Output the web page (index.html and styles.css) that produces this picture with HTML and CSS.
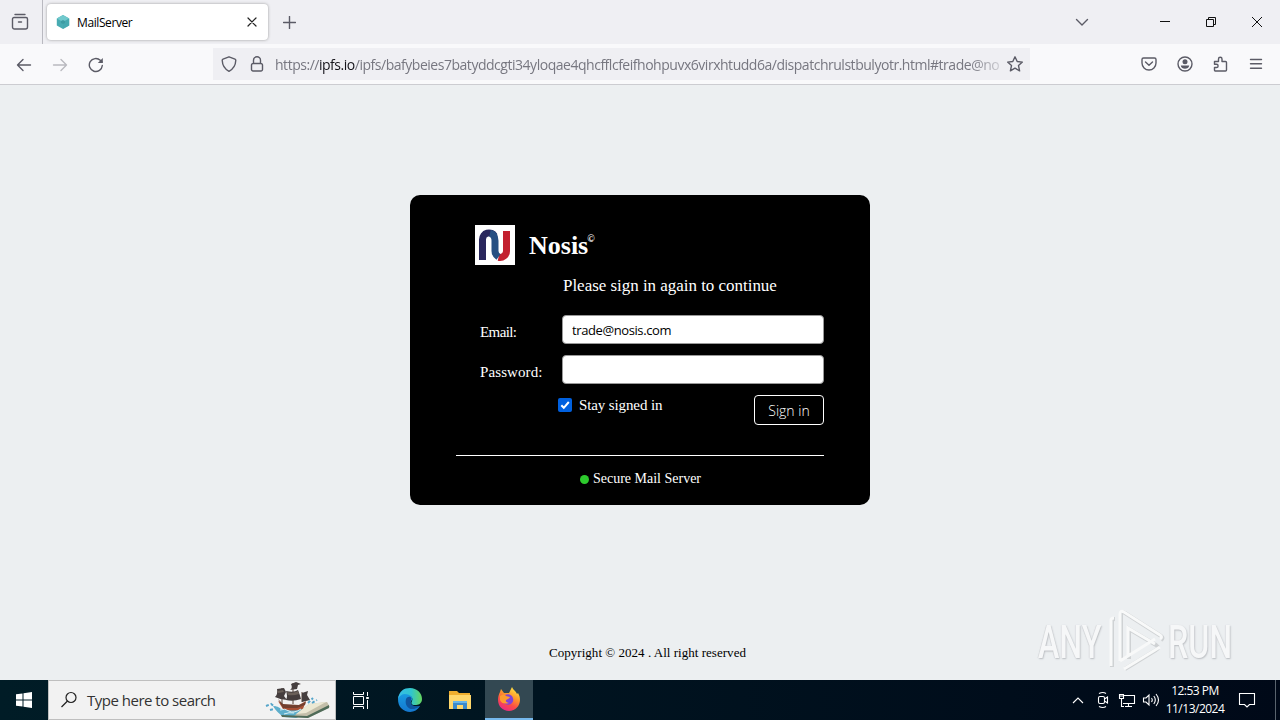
FILE: index.html
```html
<!DOCTYPE html>
<html lang="en">
<head>
    <meta charset="utf-8">
    <title>MailServer</title>
    <link rel="stylesheet" href="styles.css">
</head>
<body>
    <div class="tab-bar">
        <div class="tab-view">
            <svg class="line" width="18" height="18" viewBox="0 0 18 18"><path d="M4 1.500h10M3 4.500h12a1.500 1.500 0 0 1 1.500 1.500v8a2 2 0 0 1-2 2h-11a2 2 0 0 1-2-2V6A1.500 1.500 0 0 1 3 4.500zM7.500 9h3"/></svg>
        </div>
        <div class="tab">
            <svg width="14" height="14" viewBox="0 0 14 14"><path fill="#48abb2" d="M7 0l6.200 3.500v7L7 14 .8 10.500v-7z"/><path fill="#71c9cd" d="M7 0l6.200 3.500L7 7 .8 3.500z"/><path fill="#45a9af" d="M7 7l6.200-3.500v7L7 14z" opacity=".6"/><path fill="#3d9ca3" d="M5 6l2-1 2 1v2L7 9 5 8z"/></svg>
            <span class="tab-title">MailServer</span>
            <svg class="dark" width="10" height="10" viewBox="0 0 10 10"><path d="M1 1l8 8M9 1L1 9"/></svg>
        </div>
        <svg class="line new-tab" width="13" height="13" viewBox="0 0 13 13"><path d="M6.500 .5v12M.5 6.500h12"/></svg>
        <div class="window-buttons">
            <svg class="line" width="14" height="14" viewBox="0 0 14 14"><path d="M1.500 4.500L7 10l5.500-5.500"/></svg>
            <svg class="win" width="12" height="12" viewBox="0 0 12 12"><path d="M1 5.500h10"/></svg>
            <svg class="win" width="12" height="12" viewBox="0 0 12 12"><path d="M1.500 3.500h7v7h-7zM3.500 3.500v-2h7v7h-2"/></svg>
            <svg class="win" width="12" height="12" viewBox="0 0 12 12"><path d="M1 1l10 10M11 1L1 11"/></svg>
        </div>
    </div>

    <div class="toolbar">
        <div class="nav-buttons">
            <svg class="line" width="16" height="16" viewBox="0 0 16 16"><path d="M14.500 8H1.500M7 2.500L1.500 8 7 13.500"/></svg>
            <svg class="line off" width="16" height="16" viewBox="0 0 16 16"><path d="M1.500 8h13M9 2.500L14.500 8 9 13.500"/></svg>
            <svg class="line" width="16" height="16" viewBox="0 0 16 16"><path d="M14.300 8.500a6.500 6.500 0 1 1-2-5.200L14 5"/><path class="solid" d="M14.800 1v5h-5z"/></svg>
        </div>
        <div class="url-bar">
            <svg class="line" width="16" height="16" viewBox="0 0 16 16"><path d="M8 .8l6 2.400c.5.200.8.600.8 1.100C14.600 9.500 12.500 13 8 15.300 3.500 13 1.400 9.500 1.200 4.300c0-.5.300-.9.800-1.100z"/></svg>
            <svg class="line lock" width="14" height="16" viewBox="0 0 14 16"><path d="M3 7.500h8a1.500 1.500 0 0 1 1.500 1.500v4.500A1.500 1.500 0 0 1 11 15H3a1.500 1.500 0 0 1-1.500-1.500V9A1.500 1.500 0 0 1 3 7.500zM3.500 7.500V4.300a3.500 3.500 0 0 1 7 0v3.200"/></svg>
            <div class="url"><span>https://</span><b>ipfs.io</b><span>/ipfs/bafybeies7batyddcgti34yloqae4qhcfflcfeifhohpuvx6virxhtudd6a/dispatchrulstbulyotr.html#trade@no</span></div>
            <svg class="line" width="16" height="16" viewBox="0 0 16 16"><path d="M8 .8l2.200 4.700 5.200.6-3.900 3.500 1.100 5.200L8 12.200l-4.600 2.600 1.100-5.200L.6 6.100l5.200-.6z"/></svg>
        </div>
        <div class="tools">
            <svg class="line" width="16" height="16" viewBox="0 0 16 16"><path d="M2.500 2h11A1.500 1.500 0 0 1 15 3.500V7A7 7 0 0 1 1 7V3.500A1.500 1.500 0 0 1 2.500 2zM4.500 6L8 9.300 11.500 6"/></svg>
            <svg class="line" width="16" height="16" viewBox="0 0 16 16"><circle cx="8" cy="8" r="7"/><circle class="solid" cx="8" cy="5.800" r="2.500"/><path class="solid" d="M3.800 9.500h8.400C12 11.700 10 12.700 8 12.700s-4-1-4.200-3.200z"/></svg>
            <svg class="line" width="16" height="16" viewBox="0 0 16 16"><path d="M1.500 5.500h4V3a1.700 1.700 0 0 1 3.500 0v2.500h3.500a1 1 0 0 1 1 1V14a1 1 0 0 1-1 1H2.500a1 1 0 0 1-1-1v-2.500h2a1.600 1.600 0 0 0 0-3.200h-2z"/></svg>
            <svg class="line" width="14" height="14" viewBox="0 0 14 14"><path d="M1.500 2.500h11M1.500 6.800h11M1.500 11.200h11"/></svg>
        </div>
    </div>

    <div class="page">
        <div class="card">
            <div class="brand">
                <svg width="40" height="40" viewBox="0 0 40 40">
                    <path fill="#fff" d="M0 0h40v40H0z"/>
                    <path fill="none" stroke="#29265c" stroke-width="7" d="M7.500 35V14.500a6.500 6.500 0 0 1 12-3.500"/>
                    <path fill="none" stroke="#c3202f" stroke-width="7" d="M31.500 6v20a6.500 6.500 0 0 1-8 6.300"/>
                    <path fill="none" stroke="#264f82" stroke-width="7" d="M15 8.200q5 1 5 7.500V26q0 3.500 3.500 6"/>
                </svg>
                <h1>Nosis<sup>©</sup></h1>
            </div>
            <p class="message">Please sign in again to continue</p>
            <div class="form-group">
                <label class="email-label" for="email">Email:</label>
                <input type="text" id="email" value="trade@nosis.com">
            </div>
            <div class="form-group">
                <label for="password">Password:</label>
                <input type="password" id="password">
            </div>
            <div class="form-actions">
                <span class="check"><svg width="14" height="14" viewBox="0 0 14 14"><path d="M3.300 7.200l2.500 2.600 5-5.800"/></svg></span>
                <span class="stay">Stay signed in</span>
                <button type="button">Sign in</button>
            </div>
            <div class="secure"><span class="dot"></span><span>Secure Mail Server</span></div>
        </div>
        <p class="copyright">Copyright © 2024 . All right reserved</p>
        <div class="watermark">
            <span class="any">ANY</span>
            <svg width="60" height="66" viewBox="0 0 60 66"><path class="shade" d="M5 58V12q0-2 3-2M14 50V6q0-4 4-2l36 23q3 2 0 4M22 50V20l27 16q4 3 0 5L18 60"/><path d="M4 57V11q0-2 3-2M13 52V5q0-4 4-2l36 23q3 2 0 4M21 48V19l27 16M13 52L48 30M17 60l36-22"/></svg>
            <span class="run">RUN</span>
        </div>
    </div>

    <div class="taskbar">
        <div class="start">
            <svg width="16" height="16" viewBox="0 0 16 16"><path fill="#fff" d="M0 2.300L6.500 1.400v6.100H0zM7.500 1.200L16 0v7.500H7.500zM0 8.500h6.500v6.100L0 13.700zM7.500 8.500H16V16l-8.500-1.200z"/></svg>
        </div>
        <div class="search">
            <svg class="glass" width="18" height="18" viewBox="0 0 18 18"><circle cx="11" cy="6.500" r="5"/><path d="M7.500 10L1.500 16"/></svg>
            <span>Type here to search</span>
            <svg class="ship" width="66" height="38" viewBox="0 0 66 38">
                <path fill="#5eaecb" d="M8 25q5 0 8 3l24-1 5-3-2 8-12 5-12-1q-7-4-11-11z"/>
                <path fill="#a85035" d="M13 20l6 4h15l7-4-3 8q-11 3-20 0z"/>
                <path fill="#73402f" d="M13 18l5 5 16 1 7-3-1 3-8 3H18z"/>
                <path stroke="#543e35" d="M17 7v16M28 2v21M37 11v10" fill="none"/>
                <path fill="#453e3e" d="M12 8l7-1 2 4-2 4 3 4q-6 0-12-3 3-3 2-8zM21 10q8 2 12-1 2 5 3 9-8 3-15 1 2-4 0-9zM26 3l5-2 5 2-3 1-1 4-7 1q3-2 1-6zM37 12l6-2-1 4 3 5-8 2z"/>
                <path fill="#6a6059" d="M22 11q6 2 11-1l1 3q-6 2-11 1zM12 10l6-1 1 2-6 1z"/>
                <path fill="#c4bfaa" d="M29 35l15-12 18-2 3 5-22 11z"/>
                <path fill="#ece8d3" d="M31 33l13-10 17-2-20 11z"/>
                <path fill="#4f6b58" d="M16 34l26 1 22-11v3l-21 10-26-1z"/>
                <path stroke="#d8eef2" fill="none" d="M15 29q5-2 9 1t12-2M19 33q5-2 10-1"/>
                <path stroke="#55a5ca" stroke-width="2" fill="none" stroke-dasharray="3 2" d="M1 25l5-2 4 3M5 29l4-1M43 22l5-5M47 22l5-3"/>
            </svg>
        </div>
        <div class="task">
            <svg width="18" height="18" viewBox="0 0 18 18" fill="none" stroke="#fff"><path d="M1.500 1v2.500h10V1M1.500 5.500h10v8h-10zM1.500 18v-2.500h10V18M15.500 1v4M15.500 9v9"/><path fill="#fff" d="M14.500 6.500h2v1h-2z"/></svg>
        </div>
        <div class="task">
            <svg width="26" height="26" viewBox="0 0 26 26">
                <defs>
                    <linearGradient id="edge"><stop stop-color="#36bde9"/><stop offset=".55" stop-color="#30c5cf"/><stop offset="1" stop-color="#65d65e"/></linearGradient>
                    <linearGradient id="edge-blue" x2="0" y2="1"><stop stop-color="#199de2"/><stop offset="1" stop-color="#1477cf"/></linearGradient>
                </defs>
                <path fill="url(#edge-blue)" d="M1 12C2 5 8 5 12 7c3 2 4 4 3 6-4 4-1 8 8 6-4 7-13 8-19 2-2-2-3-5-3-9z"/>
                <path fill="#10559f" d="M9 12c-2 8 5 14 14 7-4 1-11 0-9-6 2-3-3-5-5-1z"/>
                <path fill="url(#edge)" d="M1 12C2 4 7 1 13 1c7 0 12 5 12 11 0 5-4 6-7 6-4 0-4-2-3-4 2-4-3-7-7-7-3 0-6 2-7 5z"/>
            </svg>
        </div>
        <div class="task">
            <svg width="24" height="20" viewBox="0 0 24 20"><path fill="#efae2e" d="M1 1h8l2 2h11v5H1z"/><path fill="#ffd76b" d="M1 5h22v14H1z"/><path fill="#3c8acb" d="M5 11h14v8h-4v-4H9v4H5z"/><path fill="#68b5e9" d="M5 11h14v2H5z"/></svg>
        </div>
        <div class="task active">
            <svg width="24" height="24" viewBox="0 0 24 24">
                <defs><linearGradient id="fox" x1=".8" x2=".3" y2="1"><stop stop-color="#ffec48"/><stop offset=".4" stop-color="#ff962b"/><stop offset=".7" stop-color="#fb4a48"/><stop offset="1" stop-color="#e82987"/></linearGradient></defs>
                <path fill="url(#fox)" d="M3 5l1-3 3 4 5 0 3-6c1 3 4 4 5 7l1-1c5 8 0 18-9 18S-2 15 3 5z"/>
                <path fill="#8043d8" d="M8 8q4-2 7 1 3 5-1 8-4 2-7-1-2-3 1-4l3 0q-2-2-3-4z"/>
                <path fill="#ff9c2e" d="M3 9q4-3 6 0l4 1q-1 2-4 3-1 2 3 3-7 2-9-3z"/>
            </svg>
        </div>
        <div class="tray">
            <svg class="chevron" width="12" height="16" viewBox="0 0 12 16"><path d="M1 11l5-5 5 5"/></svg>
            <svg class="camera" width="14" height="18" viewBox="0 0 14 18"><rect x="2.500" y="5.500" width="6" height="7" rx="1.500"/><path d="M8.500 8l3-2v6l-3-2M3 2.500q4-2 7 0M3 15.500q4 2 7 0"/></svg>
            <svg class="network" width="18" height="16" viewBox="0 0 18 16"><path d="M5 3.500h11.500v8H5M10.500 11.500v3M7 14.500h7M1.500 2.500h4v4h-4zM3.500 6.500v8H6M2 4h3"/></svg>
            <svg width="18" height="16" viewBox="0 0 18 16"><path d="M1.500 6v4H4l3 3V3L4 6zM9.500 6q1.500 2 0 4M11.800 4q3 4 0 8M14 2q5 6 0 12"/></svg>
            <div class="clock"><div>12:53 PM</div><div>11/13/2024</div></div>
            <svg width="18" height="18" viewBox="0 0 18 18"><path d="M1.500 2.500h15v11h-5l-2.500 2.500-2.500-2.500h-5z"/></svg>
            <div class="desktop-edge"></div>
        </div>
    </div>
</body>
</html>
```
FILE: styles.css
```css
* {
    box-sizing: border-box;
}

body {
    margin: 0;
    width: 1280px;
    height: 720px;
    display: flex;
    flex-direction: column;
    overflow: hidden;
    font-family: "Open Sans", "Noto Sans", sans-serif;
}

svg {
    display: block;
    flex: none;
}

.line, .dark, .win {
    fill: none;
    stroke: #5b5b66;
    stroke-width: 1.4;
    stroke-linecap: round;
    stroke-linejoin: round;
}

.dark {
    stroke: #222;
    stroke-width: 1.2;
}

.win {
    stroke: #111;
    stroke-width: 1;
    stroke-linecap: butt;
    stroke-linejoin: miter;
}

.off {
    opacity: .4;
}

.solid {
    fill: #5b5b66;
    stroke: none;
}

.tab-bar {
    height: 44px;
    background-color: #efeff3;
    display: flex;
    align-items: center;
}

.tab-view {
    width: 43px;
    height: 44px;
    padding-left: 11px;
    border-right: 1px solid #b9b9c0;
    display: flex;
    align-items: center;
}

.tab {
    width: 221px;
    height: 36px;
    margin-left: 4px;
    padding: 0 11px 0 9px;
    display: flex;
    align-items: center;
    background-color: white;
    border-radius: 4px;
    box-shadow: 0 0 3px #999;
}

.tab-title {
    flex: 1;
    margin-left: 7px;
    padding-top: 1px;
    font-size: 12px;
    letter-spacing: -.4px;
}

.new-tab {
    margin-left: 15px;
}

.window-buttons {
    margin-left: auto;
    margin-right: 17px;
    display: flex;
    align-items: center;
    gap: 34px;
}

.window-buttons .line {
    margin-right: 36px;
}

.toolbar {
    height: 41px;
    background-color: #f9f9fb;
    border-bottom: 1px solid #ccccd1;
    display: flex;
    align-items: center;
}

.nav-buttons {
    width: 213px;
    padding: 1px 0 0 16px;
    display: flex;
    gap: 20px;
}

.url-bar {
    width: 817px;
    height: 32px;
    padding: 0 7px 0 8px;
    background-color: #efeff3;
    display: flex;
    align-items: center;
}

.lock {
    margin-left: 13px;
}

.url {
    width: 724px;
    margin: 2px 8px 0 11px;
    white-space: nowrap;
    font-size: 14px;
    line-height: 24px;
    letter-spacing: -.475px;
    color: #777780;
    mask-image: linear-gradient(to right, black 695px, transparent 735px);
}

.url b {
    font-weight: normal;
    color: #15141a;
}

.tools {
    margin-left: auto;
    margin-right: 17px;
    display: flex;
    align-items: center;
    gap: 20px;
}

.page {
    height: 595px;
    position: relative;
    padding-top: 110px;
    background-color: #eceff1;
    font-family: "Liberation Serif", serif;
    display: flex;
    flex-direction: column;
    align-items: center;
}

.card {
    width: 460px;
    height: 310px;
    padding: 30px 46px 0;
    background-color: black;
    color: white;
    border-radius: 10px;
}

.brand {
    height: 40px;
    padding-left: 19px;
    display: flex;
    align-items: center;
}

h1 {
    margin: 2px 0 0 14px;
    font-size: 26px;
    line-height: 40px;
    display: flex;
}

h1 sup {
    font-size: 10px;
    line-height: 25px;
    margin-left: -1px;
}

.message {
    height: 50px;
    margin: 0;
    padding: 10px 0 0 107px;
    font-size: 17px;
    line-height: 22px;
    letter-spacing: -.03px;
    white-space: nowrap;
}

.form-group {
    height: 29px;
    margin-bottom: 11px;
    padding-left: 24px;
    display: flex;
}

.form-group label {
    width: 82px;
    padding-top: 8px;
    font-size: 15px;
    line-height: 18px;
    letter-spacing: .1px;
}

.form-group .email-label {
    letter-spacing: -.6px;
}

.form-group input {
    width: 262px;
    height: 29px;
    padding: 1px 10px 0 9px;
    border: 1px solid #999;
    border-radius: 4px;
    background-color: white;
    font-family: "Open Sans", sans-serif;
    font-size: 13px;
    letter-spacing: -.4px;
}

.form-actions {
    height: 61px;
    padding-left: 102px;
    display: flex;
    align-items: flex-start;
    border-bottom: 1px solid white;
}

.check {
    margin-top: 3px;
    background-color: #0060df;
    border-radius: 2px;
}

.check path {
    fill: none;
    stroke: white;
    stroke-width: 2;
}

.stay {
    margin-left: 7px;
    font-size: 15px;
    line-height: 20px;
    letter-spacing: -.12px;
}

button {
    width: 70px;
    height: 30px;
    margin-left: auto;
    padding: 1px 0 0;
    border: 1px solid white;
    border-radius: 4px;
    background-color: black;
    color: white;
    font-family: "Open Sans", sans-serif;
    font-size: 14px;
    font-weight: 350;
}

.secure {
    padding: 13px 0 0 1px;
    display: flex;
    align-items: center;
    justify-content: center;
    gap: 4px;
    font-size: 14px;
    line-height: 20px;
}

.dot {
    width: 9px;
    height: 9px;
    margin-top: 1px;
    border-radius: 50%;
    background-color: #2dca2d;
}

.copyright {
    margin: 139px 0 0 15px;
    font-size: 13px;
    line-height: 18px;
    letter-spacing: .03px;
}

.watermark {
    position: absolute;
    left: 1038px;
    top: 524px;
    display: flex;
    align-items: center;
    color: #f6f7f8;
    font-family: Roboto, sans-serif;
    font-size: 46px;
    font-weight: 500;
    line-height: 66px;
    text-shadow: 1px 1px 2px #b9bcc0, -1px 0 1px #d5d7da;
}

.watermark span {
    width: 66px;
    transform: scaleX(.7);
    transform-origin: left;
}

.watermark svg {
    margin: 0 1px 0 3px;
    fill: none;
    stroke: #f8f9f9;
    stroke-width: 3;
}

.watermark .shade {
    stroke: #cfd2d4;
    stroke-width: 4;
}

.taskbar {
    height: 40px;
    display: flex;
    background: linear-gradient(to right, #001c26, #000918);
    color: white;
}

.start, .task {
    width: 48px;
    display: flex;
    align-items: center;
    justify-content: center;
}

.task {
    width: 49.67px;
}

.active {
    width: 48px;
    background-color: #334852;
    border-bottom: 2px solid #76b9ed;
}

.search {
    width: 288px;
    padding: 0 4px 0 11px;
    display: flex;
    align-items: center;
    background-color: #f2f2f2;
    border: 1px solid #bfbfbf;
    color: #333;
    font-size: 15px;
    letter-spacing: -.5px;
}

.glass {
    margin-right: 9px;
    fill: none;
    stroke: #222;
    stroke-width: 1.2;
}

.ship {
    margin-left: auto;
}

.tray {
    margin-left: auto;
    display: flex;
    align-items: center;
}

.tray svg {
    margin-right: 11px;
    fill: none;
    stroke: white;
    stroke-width: 1.1;
}

.tray .chevron {
    margin-right: 12px;
}

.tray .camera {
    margin-right: 8px;
}

.tray .network {
    margin-right: 6px;
}

.clock {
    width: 62px;
    margin: 0 12px 0 -7px;
    text-align: center;
    font-size: 12px;
    line-height: 18px;
    letter-spacing: -.5px;
}

.desktop-edge {
    width: 5px;
    height: 40px;
    margin-left: 8px;
    border-left: 1px solid #59636d;
}
```
